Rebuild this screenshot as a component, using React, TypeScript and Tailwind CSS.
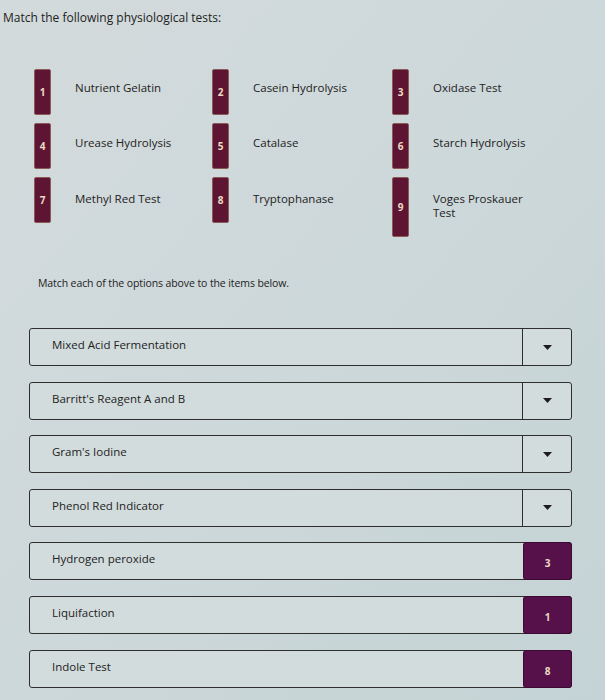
const tests = [
  { n: 1, label: "Nutrient Gelatin" },
  { n: 2, label: "Casein Hydrolysis" },
  { n: 3, label: "Oxidase Test" },
  { n: 4, label: "Urease Hydrolysis" },
  { n: 5, label: "Catalase" },
  { n: 6, label: "Starch Hydrolysis" },
  { n: 7, label: "Methyl Red Test" },
  { n: 8, label: "Tryptophanase" },
  { n: 9, label: "Voges Proskauer Test" },
];

const items: { label: string; answer?: number }[] = [
  { label: "Mixed Acid Fermentation" },
  { label: "Barritt's Reagent A and B" },
  { label: "Gram's Iodine" },
  { label: "Phenol Red Indicator" },
  { label: "Hydrogen peroxide", answer: 3 },
  { label: "Liquifaction", answer: 1 },
  { label: "Indole Test", answer: 8 },
];

const Caret = () => (
  <svg width="9" height="5" viewBox="0 0 9 5">
    <path d="M0 0 L9 0 L4.5 5 Z" fill="#1c1c1c" />
  </svg>
);

const App = () => {
  return (
    <div
      className="w-[605px] h-[700px] overflow-hidden bg-gradient-to-br from-[#d3dadc] via-[#cdd8da] to-[#c4d3d5] text-[#222]"
      style={{ fontFamily: "'Open Sans', Lato, sans-serif" }}
    >
      <div className="pt-[9px] pl-[3px] text-[12px] leading-[18px]">
        Match the following physiological tests:
      </div>

      {/* Options grid */}
      <div className="grid grid-cols-[178px_180px_180px] gap-y-[8px] ml-[34px] mt-[42px]">
        {tests.map((t, i) => (
          <div key={t.n} className="flex items-start">
            <div
              className={`w-[17px] ${t.n === 9 ? "h-[60px]" : "h-[46px]"} shrink-0 rounded-[2px] bg-[#5e1533] border border-[#8a5a55] flex items-center justify-center text-[10px] font-bold text-[#eadbc0]`}
            >
              {t.n}
            </div>
            <div
              className={`ml-[24px] ${i < 3 ? "mt-[12px]" : i < 6 ? "mt-[13px]" : "mt-[15px]"} text-[11.5px] leading-[14px] w-[102px]`}
            >
              {t.label}
            </div>
          </div>
        ))}
      </div>

      <div className="ml-[38px] mt-[39px] text-[10.5px] leading-[14px] tracking-[-0.1px]">
        Match each of the options above to the items below.
      </div>

      {/* Items */}
      <div className="ml-[29px] w-[543px] mt-[38px] flex flex-col gap-[15.6px]">
        {items.map((it) => (
          <div
            key={it.label}
            className="h-[38px] flex border border-[#2e2e2e] rounded-[3px] bg-[#d2dcdd]"
          >
            <div className="flex-1 pl-[22px] pt-[7px] text-[11.5px]">
              {it.label}
            </div>
            {it.answer ? (
              <div className="w-[49px] -my-px -mr-px rounded-[3px] bg-[#56104a] border border-[#3c0a33] flex justify-center pt-[13px] text-[10px] font-bold text-[#eadbc0]">
                {it.answer}
              </div>
            ) : (
              <div className="w-[49px] border-l border-[#2e2e2e] flex items-center justify-center">
                <Caret />
              </div>
            )}
          </div>
        ))}
      </div>
    </div>
  );
};

export default App;
